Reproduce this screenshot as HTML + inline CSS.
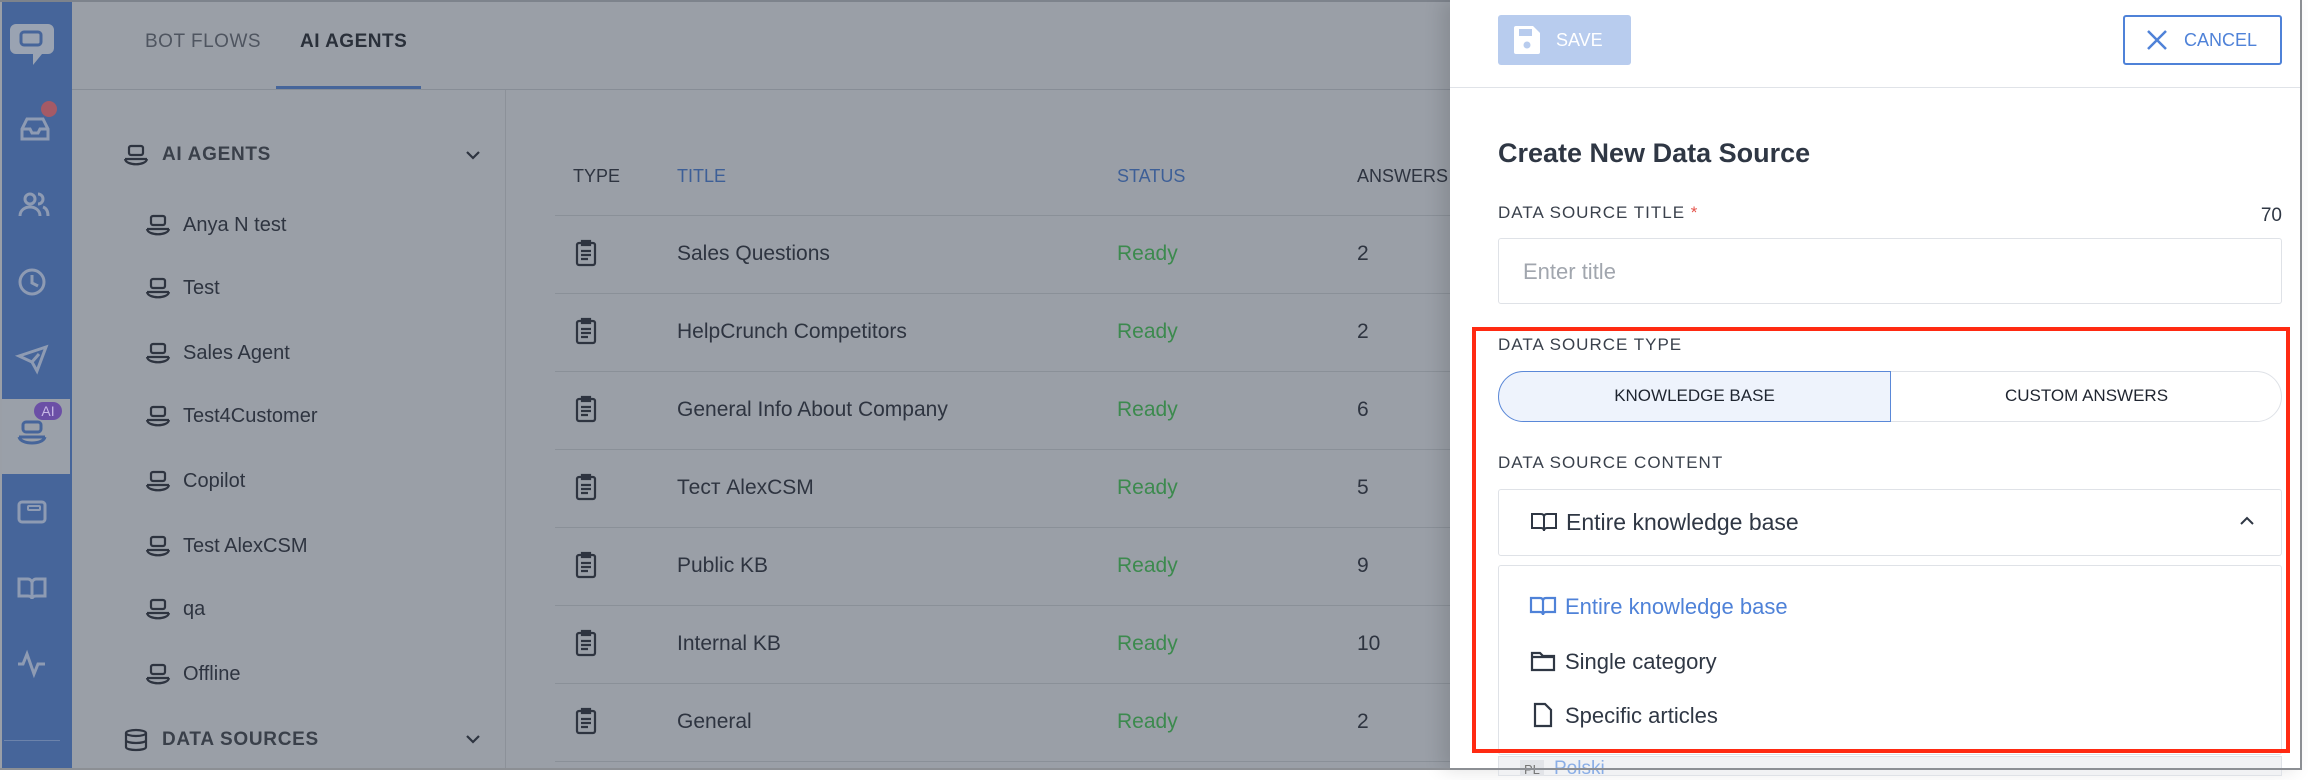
<!DOCTYPE html>
<html><head><meta charset="utf-8"><style>
*{box-sizing:border-box;margin:0;padding:0}
body{width:2308px;height:778px;background:#fff;position:relative;overflow:hidden;font-family:"Liberation Sans",sans-serif}
.a{position:absolute}
.frame{left:0;top:0;width:2302px;height:770px;background:#9a9fa7;border-top:2px solid #7d838c;overflow:hidden}
.side{left:2px;top:0;width:70px;height:770px;background:#46659a}
.t{position:absolute;white-space:nowrap;color:#2e3440}
svg{position:absolute;overflow:visible}
.ic{fill:none;stroke:#2e3440;stroke-width:2.2}
.si{fill:none;stroke:#8e9bb3;stroke-width:3}
.panel{left:1450px;top:0;width:852px;height:770px;background:#fff;box-shadow:-8px 0 18px rgba(0,0,0,.12)}
.lab{position:absolute;font-size:17px;letter-spacing:1px;color:#3a414c;white-space:nowrap}
</style></head><body>
<div class="a frame">
 <div class="a side"></div>
 <svg style="left:10px;top:20px" width="52" height="46"><path d="M6 2h32a6 6 0 0 1 6 6v18a6 6 0 0 1-6 6H32l-9 11V32H6a6 6 0 0 1-6-6V8a6 6 0 0 1 6-6z" fill="#9aa3b2"/><rect x="11" y="10" width="20" height="13" rx="3" fill="none" stroke="#46659a" stroke-width="3"/></svg>
 <div class="a" style="left:41px;top:99px;width:16px;height:16px;border-radius:8px;background:#a55a66"></div>
 <svg style="left:20px;top:115px" width="30" height="26"><path class="si" d="M2 12l5-10h16l5 10v10H2z M2 12h8l2 4h6l2-4h8"/></svg>
 <svg style="left:19px;top:190px" width="30" height="26"><circle class="si" cx="11" cy="7" r="5"/><path class="si" d="M1 24c0-6 5-9 10-9s10 3 10 9 M19 2a5 5 0 0 1 0 10 M24 15c3 1 5 4 5 9"/></svg>
 <svg style="left:18px;top:266px" width="30" height="30"><circle class="si" cx="14" cy="14" r="12"/><path class="si" d="M14 7v8l6 3"/></svg>
 <svg style="left:18px;top:343px" width="30" height="26"><path class="si" d="M1 11L28 2l-9 24-5-9z M14 17l7-8"/></svg>
 <div class="a" style="left:2px;top:397px;width:68px;height:75px;background:#9aa0a9"></div>
 <svg style="left:18px;top:418px" width="30" height="30"><rect class="si" x="5" y="2" width="18" height="10" rx="3" style="stroke:#46659a"/><path class="si" d="M1 17h26 M1 17c2 8 24 8 26 0" style="stroke:#46659a"/></svg>
 <div class="a" style="left:34px;top:400px;width:28px;height:18px;border-radius:9px;background:#6b4fa6;color:#c8b8e6;font-size:14px;text-align:center;line-height:18px">AI</div>
 <svg style="left:18px;top:498px" width="30" height="26"><rect class="si" x="1" y="2" width="26" height="20" rx="3"/><rect class="si" x="10" y="6" width="12" height="4" rx="1" style="stroke-width:2"/></svg>
 <svg style="left:18px;top:574px" width="30" height="26"><path class="si" d="M1 3h9c2 0 4 2 4 4v16c0-2-2-3-4-3H1z M27 3h-9c-2 0-4 2-4 4v16c0-2 2-3 4-3h9z"/></svg>
 <svg style="left:17px;top:648px" width="30" height="26"><path class="si" d="M1 14h5l4-10 7 20 4-10h7"/></svg>
 <div class="a" style="left:4px;top:738px;width:56px;height:1px;background:#6c83ab"></div>

 <div class="t" style="left:145px;top:29px;font-size:19px;letter-spacing:.5px;color:#4f5560">BOT FLOWS</div>
 <div class="t" style="left:300px;top:29px;font-size:19px;letter-spacing:.5px;color:#2a303a;font-weight:bold">AI AGENTS</div>
 <div class="a" style="left:276px;top:84px;width:145px;height:3px;background:#46659a"></div>
 <div class="a" style="left:72px;top:87px;width:1380px;height:1px;background:#878d96"></div>
 <div class="a" style="left:505px;top:88px;width:1px;height:690px;background:#8c9199"></div>

 <svg style="left:124px;top:143px" width="24" height="22"><rect class="ic" x="5" y="1" width="14" height="9" rx="2"/><path class="ic" d="M1 14h22 M1 14c1 7 21 7 22 0"/></svg>
 <div class="t" style="left:162px;top:142px;font-size:19px;letter-spacing:.7px;font-weight:bold;color:#3a404a">AI AGENTS</div>
 <svg style="left:466px;top:148px" width="14" height="10"><path class="ic" d="M1 2l6 6 6-6"/></svg>
 <div id="agents"></div>
 <svg style="left:124px;top:727px" width="24" height="22"><ellipse class="ic" cx="12" cy="4" rx="10" ry="3"/><path class="ic" d="M2 4v14c0 4 20 4 20 0V4 M2 11c0 4 20 4 20 0"/></svg>
 <div class="t" style="left:162px;top:727px;font-size:19px;letter-spacing:.7px;font-weight:bold;color:#3a404a">DATA SOURCES</div>
 <svg style="left:466px;top:732px" width="14" height="10"><path class="ic" d="M1 2l6 6 6-6"/></svg>

 <div class="t" style="left:573px;top:164px;font-size:18px;color:#2e3440">TYPE</div>
 <div class="t" style="left:677px;top:164px;font-size:18px;color:#3d5f97">TITLE</div>
 <div class="t" style="left:1117px;top:164px;font-size:18px;color:#3d5f97">STATUS</div>
 <div class="t" style="left:1357px;top:164px;font-size:18px;color:#2e3440">ANSWERS</div>
 <div id="rows"></div>
</div>

<div class="a panel">
 <div class="a" style="left:48px;top:15px;width:133px;height:50px;background:#b8ccee;border-radius:3px"></div>
 <svg style="left:64px;top:26px" width="26" height="28"><path d="M2 0h17l7 7v19a2 2 0 0 1-2 2H2a2 2 0 0 1-2-2V2a2 2 0 0 1 2-2z" fill="#fff"/><rect x="5" y="3" width="13" height="7" fill="#b8ccee"/><circle cx="13" cy="19" r="3.5" fill="#b8ccee"/></svg>
 <div class="t" style="left:106px;top:30px;font-size:18px;color:#fff">SAVE</div>
 <div class="a" style="left:673px;top:15px;width:159px;height:50px;border:2px solid #4f82d8;border-radius:3px"></div>
 <svg style="left:697px;top:30px" width="20" height="20"><path d="M1 1l18 18M19 1L1 19" stroke="#4f82d8" stroke-width="2.5"/></svg>
 <div class="t" style="left:734px;top:30px;font-size:18px;color:#4f82d8">CANCEL</div>
 <div class="a" style="left:0;top:87px;width:852px;height:1px;background:#e0e3e8"></div>

 <div class="t" style="left:48px;top:138px;font-size:27px;font-weight:bold;color:#2f3744">Create New Data Source</div>
 <div class="lab" style="left:48px;top:203px">DATA SOURCE TITLE <span style="color:#e5534b">*</span></div>
 <div class="t" style="right:20px;top:205px;font-size:19px;color:#2f3744">70</div>
 <div class="a" style="left:48px;top:238px;width:784px;height:66px;border:1.5px solid #dfe2e7;border-radius:3px"></div>
 <div class="t" style="left:73px;top:259px;font-size:22px;color:#a1a6ae">Enter title</div>

 <div class="lab" style="left:48px;top:335px">DATA SOURCE TYPE</div>
 <div class="a" style="left:48px;top:371px;width:784px;height:51px;border:1.5px solid #dfe2e7;border-radius:26px"></div>
 <div class="a" style="left:48px;top:371px;width:393px;height:51px;border:1.5px solid #5a88d8;border-radius:26px 0 0 26px;background:#eef3fc"></div>
 <div class="t" style="left:48px;width:393px;text-align:center;top:386px;font-size:17px;color:#1f2530">KNOWLEDGE BASE</div>
 <div class="t" style="left:441px;width:391px;text-align:center;top:386px;font-size:17px;color:#1f2530">CUSTOM ANSWERS</div>

 <div class="lab" style="left:48px;top:453px">DATA SOURCE CONTENT</div>
 <div class="a" style="left:48px;top:489px;width:784px;height:67px;border:1.5px solid #dfe2e7;border-radius:3px"></div>
 <svg style="left:81px;top:512px" width="26" height="20"><path d="M1 2h9c2 0 3 1 3 3v14c0-2-1-3-3-3H1z M25 2h-9c-2 0-3 1-3 3v14c0-2 1-3 3-3h9z" fill="none" stroke="#2f3744" stroke-width="2"/></svg>
 <div class="t" style="left:116px;top:509px;font-size:23px;color:#2f3744">Entire knowledge base</div>
 <svg style="left:790px;top:516px" width="14" height="9"><path d="M1 8l6-6 6 6" fill="none" stroke="#2f3744" stroke-width="2"/></svg>

 <div class="a" style="left:48px;top:565px;width:784px;height:190px;border:1.5px solid #dfe2e7;border-radius:3px"></div>
 <svg style="left:80px;top:596px" width="26" height="20"><path d="M1 2h9c2 0 3 1 3 3v14c0-2-1-3-3-3H1z M25 2h-9c-2 0-3 1-3 3v14c0-2 1-3 3-3h9z" fill="none" stroke="#4f82d8" stroke-width="2.2"/></svg>
 <div class="t" style="left:115px;top:594px;font-size:22px;color:#4f82d8">Entire knowledge base</div>
 <svg style="left:81px;top:651px" width="24" height="20"><path d="M1 2h8l3 3h11v14H1z M1 6h22" fill="none" stroke="#2f3744" stroke-width="2.2"/></svg>
 <div class="t" style="left:115px;top:649px;font-size:22px;color:#2f3744">Single category</div>
 <svg style="left:84px;top:703px" width="18" height="24"><path d="M1 1h10l6 6v16H1z" fill="none" stroke="#2f3744" stroke-width="2.2"/></svg>
 <div class="t" style="left:115px;top:703px;font-size:22px;color:#2f3744">Specific articles</div>

 <div class="a" style="left:48px;top:756px;width:784px;height:20px;background:#f1f2f4;border:1px solid #dfe2e7"></div>
 <div class="a" style="left:70px;top:760px;width:24px;height:16px;background:#e2e4e8"></div>
 <div class="t" style="left:74px;top:762px;font-size:13px;color:#777">PL</div>
 <div class="t" style="left:104px;top:758px;font-size:19px;color:#8aaee6">Polski</div>

 <div class="a" style="left:22px;top:327px;width:818px;height:426px;border:4px solid #ff2a12"></div>
</div>
<div class="a" style="left:2300px;top:0;width:2px;height:770px;background:#8c8f94"></div>
<div class="a" style="left:0;top:768px;width:2302px;height:2px;background:#8c8f94"></div>

<script>
var ag=["Anya N test","Test","Sales Agent","Test4Customer","Copilot","Test AlexCSM","qa","Offline"];
var ys=[224,287,352,415,480,545,608,673],h="";
ag.forEach(function(n,i){var y=ys[i];
h+='<svg style="left:146px;top:'+(y-11)+'px" width="24" height="22"><rect class="ic" x="5" y="1" width="14" height="9" rx="2"/><path class="ic" d="M1 14h22 M1 14c1 7 21 7 22 0"/></svg>';
h+='<div class="t" style="left:183px;top:'+(y-12)+'px;font-size:20px;color:#2e3440">'+n+'</div>';});
document.getElementById('agents').outerHTML=h;
var rw=[["Sales Questions","2"],["HelpCrunch Competitors","2"],["General Info About Company","6"],["Тест AlexCSM","5"],["Public KB","9"],["Internal KB","10"],["General","2"]];
var r="";
for(var i=0;i<8;i++){r+='<div class="a" style="left:555px;top:'+(213+i*78)+'px;width:900px;height:1px;background:#8a9098"></div>';}
rw.forEach(function(x,i){var y=252+i*78;
r+='<svg style="left:576px;top:'+(y-14)+'px" width="20" height="26"><rect class="ic" x="1" y="3" width="18" height="22" rx="2"/><rect class="ic" x="6" y="1" width="8" height="4"/><path class="ic" d="M5 11h10M5 15h10M5 19h7"/></svg>';
r+='<div class="t" style="left:677px;top:'+(y-12)+'px;font-size:21px;color:#2e3440">'+x[0]+'</div>';
r+='<div class="t" style="left:1117px;top:'+(y-12)+'px;font-size:21px;color:#3c8a4e">Ready</div>';
r+='<div class="t" style="left:1357px;top:'+(y-12)+'px;font-size:21px;color:#2e3440">'+x[1]+'</div>';});
document.getElementById('rows').outerHTML=r;
</script>
</body></html>
